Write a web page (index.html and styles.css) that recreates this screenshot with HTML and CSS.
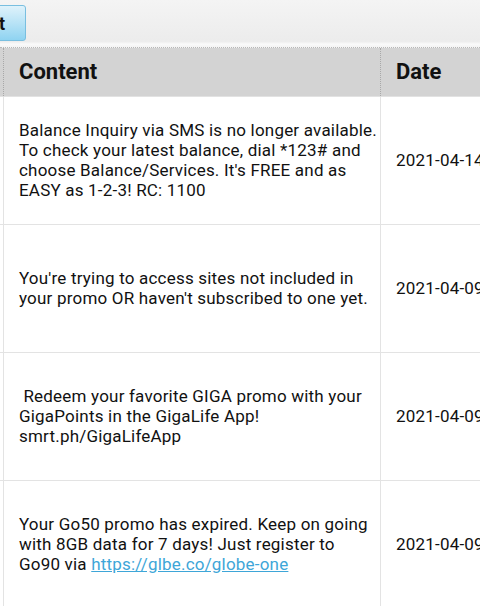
FILE: index.html
```html
<!DOCTYPE html>
<html lang="en">
  <head>
    <meta charset="UTF-8" />
    <meta name="viewport" content="width=device-width, initial-scale=1.0" />
    <title>Inbox</title>
    <link rel="stylesheet" href="styles.css">
  </head>
  <body>
    <div class="toolbar">
      <button class="button">Export</button>
    </div>

    <div class="table-wrap">
      <table class="inbox">
        <thead>
          <tr>
            <th class="col-from">From</th>
            <th class="col-content">Content</th>
            <th class="col-date">Date</th>
          </tr>
        </thead>
        <tbody>
          <tr>
            <td class="col-from">8080</td>
            <td class="col-content">Balance Inquiry via SMS is no longer available. To check your latest balance, dial *123# and choose Balance/Services. It's FREE and as EASY as 1-2-3! RC: 1100</td>
            <td class="col-date">2021-04-14 09:12</td>
          </tr>
          <tr>
            <td class="col-from">8080</td>
            <td class="col-content">You're trying to access sites not included in your promo OR haven't subscribed to one yet.</td>
            <td class="col-date">2021-04-09 18:40</td>
          </tr>
          <tr>
            <td class="col-from">2686</td>
            <td class="col-content">&nbsp;Redeem your favorite GIGA promo with your GigaPoints in the GigaLife App! smrt.ph/GigaLifeApp</td>
            <td class="col-date">2021-04-09 11:05</td>
          </tr>
          <tr>
            <td class="col-from">8080</td>
            <td class="col-content">Your Go50 promo has expired. Keep on going with 8GB data for 7 days! Just register to Go90 via <a href="#">https://glbe.co/globe-one</a></td>
            <td class="col-date">2021-04-09 07:30</td>
          </tr>
        </tbody>
      </table>
    </div>
  </body>
</html>
```

FILE: styles.css
```css
* {
  margin: 0;
  padding: 0;
  box-sizing: border-box;
}

body {
  font-family: Roboto, "Noto Sans", sans-serif;
  background-color: #fff;
  color: #111;
  width: 480px;
  height: 606px;
  overflow: hidden;
}

.toolbar {
  height: 48px;
  background: linear-gradient(#f4f4f4, #ececec 88%, #fafafa 94%, #f4f4f4);
  border-bottom: 1px dotted #b8b8b8;
  padding-top: 5px;
}

.button {
  margin-left: -54px;
  width: 80px;
  height: 36px;
  font-family: Roboto, sans-serif;
  font-size: 18px;
  font-weight: bold;
  color: #111;
  text-align: right;
  padding-right: 20px;
  background: linear-gradient(#dff2fb, #b8e3f6 50%, #8fd3f1);
  border: 1px solid #79bfe0;
  border-radius: 3px;
}

.table-wrap {
  margin-left: -100px;
}

.inbox {
  border-collapse: collapse;
  table-layout: fixed;
  width: 700px;
}

.inbox th {
  height: 48px;
  background-color: #d3d3d3;
  font-size: 22px;
  font-weight: bold;
  text-align: left;
  padding: 0 15px;
  border-left: 1px dotted #a8a8a8;
  border-right: 1px dotted #a8a8a8;
  border-bottom: 1px solid #e2e2e2;
}

.inbox td {
  height: 128px;
  font-size: 17px;
  letter-spacing: 0.2px;
  line-height: 20px;
  vertical-align: middle;
  padding: 0 0 0 15px;
  border: 1px solid #e3e3e3;
}

.col-from {
  width: 103px;
}

.col-content {
  width: 377px;
}

.col-date {
  width: 220px;
  white-space: nowrap;
}

.inbox a {
  color: #3ea6d8;
}
```
